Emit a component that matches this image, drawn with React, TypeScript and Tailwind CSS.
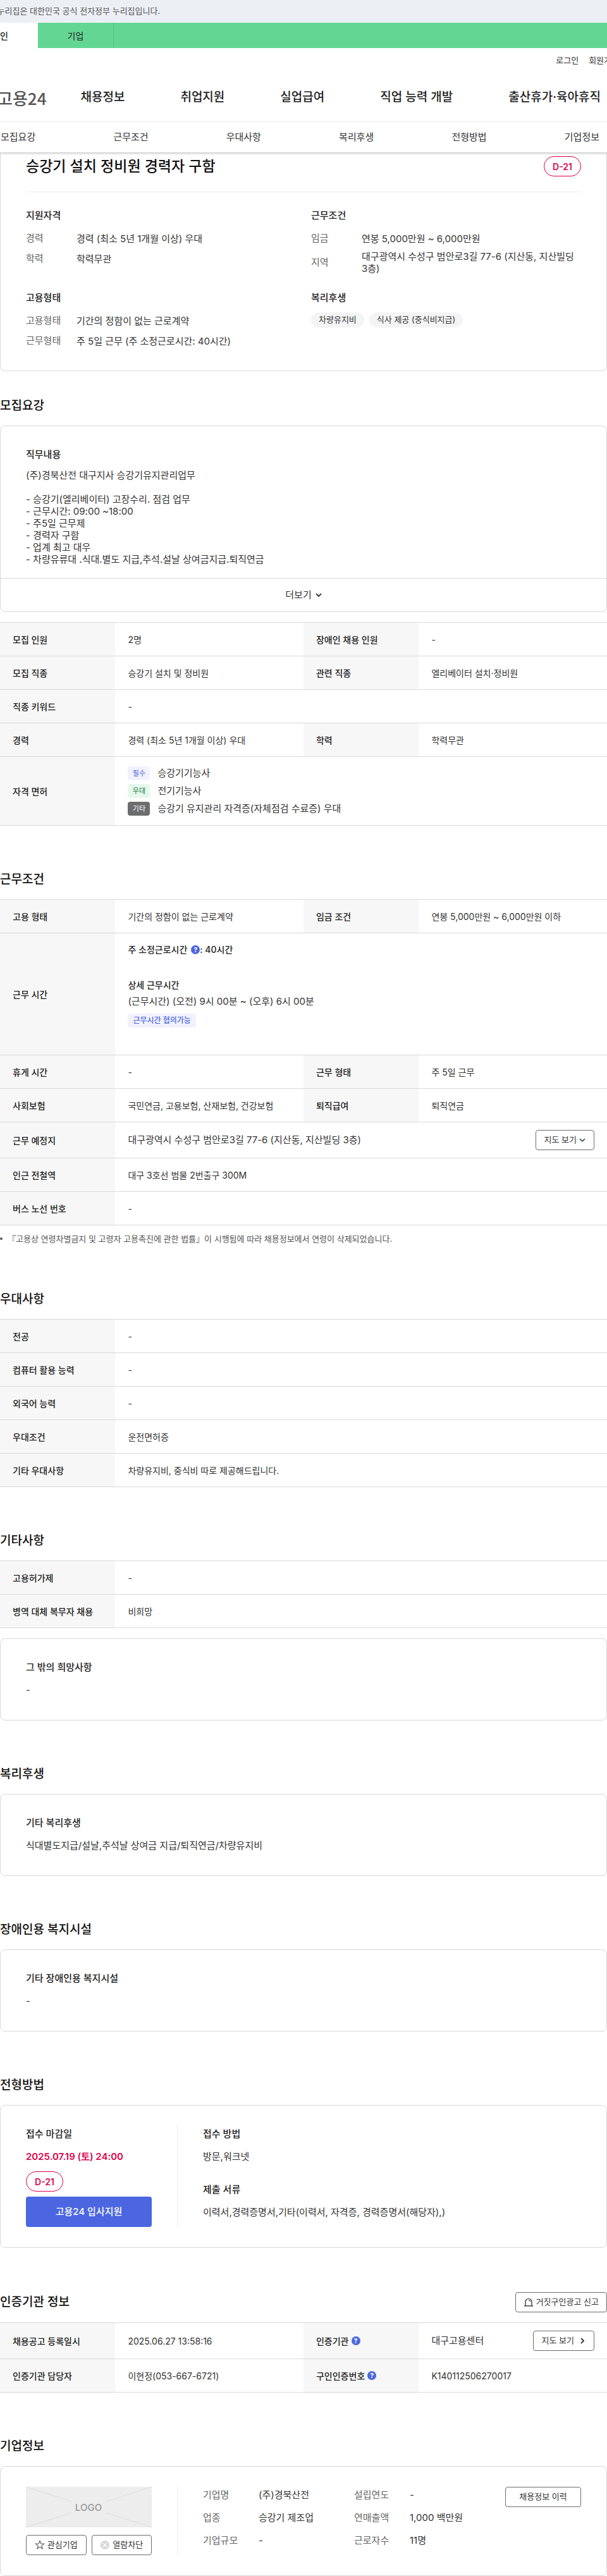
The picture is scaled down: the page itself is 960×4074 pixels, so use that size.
import React from "react";

type Field = {
  label: string;
  value: React.ReactNode;
  help?: boolean;
};

const mainMenu = ["채용정보", "취업지원", "실업급여", "직업 능력 개발", "출산휴가·육아휴직"];
const anchors = ["모집요강", "근무조건", "우대사항", "복리후생", "전형방법", "기업정보"];

const jobLines = [
  "(주)경북산전 대구지사 승강기유지관리업무",
  "",
  "- 승강기(엘리베이터) 고장수리. 점검 업무",
  "- 근무시간: 09:00 ~18:00",
  "- 주5일 근무제",
  "- 경력자 구함",
  "- 업계 최고 대우",
  "- 차량유류대 .식대.별도 지급,추석.설날 상여금지급.퇴직연금",
];

const HelpButton = () => (
  <button
    type="button"
    aria-label="도움말"
    className="inline-flex h-3.5 w-3.5 shrink-0 items-center justify-center rounded-full bg-[#4b66e0] text-[10px] font-bold leading-none text-white"
  >
    ?
  </button>
);

const Chevron = ({ className, strokeWidth = 1.5 }: { className?: string; strokeWidth?: number }) => (
  <svg viewBox="0 0 10 10" className={className} fill="none" stroke="currentColor" strokeWidth={strokeWidth}>
    <path d="M1 3l4 4 4-4" />
  </svg>
);

const DDay = () => (
  <span className="inline-flex h-8 w-[59px] items-center justify-center rounded-full border border-[#e0004d] text-[14px] font-semibold text-[#e0004d]">
    D-21
  </span>
);

const SmallButton = ({ children, className = "px-[13px]" }: { children: React.ReactNode; className?: string }) => (
  <button
    type="button"
    className={`inline-flex h-8 shrink-0 items-center justify-center gap-1 whitespace-nowrap rounded border border-[#6d6d6d] bg-white text-[13px] text-[#333] ${className}`}
  >
    {children}
  </button>
);

const Section = ({
  title,
  action,
  className = "mt-[70px]",
  children,
}: {
  title: string;
  action?: React.ReactNode;
  className?: string;
  children: React.ReactNode;
}) => (
  <section className={className}>
    <div className="mb-4 flex items-center justify-between">
      <h2 className="text-[19px] font-medium leading-[30px] text-[#111]">{title}</h2>
      {action}
    </div>
    {children}
  </section>
);

const Card = ({ children, className = "" }: { children: React.ReactNode; className?: string }) => (
  <div className={`rounded-lg border border-[#d9d9d9] bg-white ${className}`}>{children}</div>
);

const SubTitle = ({ children }: { children: React.ReactNode }) => (
  <h3 className="mb-2.5 text-[15px] font-medium leading-[26px] text-[#222]">{children}</h3>
);

const TextCard = ({ title, text }: { title: string; text: string }) => (
  <Card className="px-10 pb-[34px] pt-8">
    <SubTitle>{title}</SubTitle>
    <p className="leading-[26px]">{text}</p>
  </Card>
);

const SummaryList = ({ title, items }: { title: string; items: Field[] }) => (
  <div>
    <SubTitle>{title}</SubTitle>
    <dl className="flex flex-col gap-1.5">
      {items.map((item) => (
        <div key={item.label} className="flex min-h-[26px] items-center">
          <dt className="w-20 shrink-0 text-[#666]">{item.label}</dt>
          <dd className="leading-[19px]">{item.value}</dd>
        </div>
      ))}
    </dl>
  </div>
);

// each row holds either one field (spanning the table) or two
const InfoTable = ({ caption, rows }: { caption: string; rows: Field[][] }) => (
  <table className="w-full table-fixed border-collapse text-left text-[14px]">
    <caption className="sr-only">{caption}</caption>
    <colgroup>
      <col className="w-[19%]" />
      <col className="w-[31%]" />
      <col className="w-[19%]" />
      <col className="w-[31%]" />
    </colgroup>
    <tbody>
      {rows.map((row) => (
        <tr key={row[0].label} className="h-[53px] border-y border-[#d9d9d9]">
          {row.map((field) => (
            <React.Fragment key={field.label}>
              <th scope="row" className="bg-[#f7f7f7] px-5 font-medium text-[#222]">
                <span className="flex items-center gap-1">
                  {field.label}
                  {field.help && <HelpButton />}
                </span>
              </th>
              <td colSpan={row.length === 1 ? 3 : 1} className="px-5">
                {field.value}
              </td>
            </React.Fragment>
          ))}
        </tr>
      ))}
    </tbody>
  </table>
);

const licenses = [
  { tag: "필수", name: "승강기기능사", color: "bg-[#f1f2fe] text-[#4b66e0]" },
  { tag: "우대", name: "전기기능사", color: "bg-[#e6f8ec] text-[#137a3c]" },
  { tag: "기타", name: "승강기 유지관리 자격증(자체점검 수료증) 우대", color: "bg-[#6d6d6d] text-white" },
];

const recruitRows: Field[][] = [
  [{ label: "모집 인원", value: "2명" }, { label: "장애인 채용 인원", value: "-" }],
  [{ label: "모집 직종", value: "승강기 설치 및 정비원" }, { label: "관련 직종", value: "엘리베이터 설치·정비원" }],
  [{ label: "직종 키워드", value: "-" }],
  [{ label: "경력", value: "경력 (최소 5년 1개월 이상) 우대" }, { label: "학력", value: "학력무관" }],
  [
    {
      label: "자격 면허",
      value: (
        <ul className="flex flex-col gap-1.5 py-[15px] text-[15px]">
          {licenses.map((item) => (
            <li key={item.tag} className="flex h-[22px] items-center gap-3">
              <span className={`flex h-[22px] w-[35px] items-center justify-center rounded text-[11px] ${item.color}`}>
                {item.tag}
              </span>
              {item.name}
            </li>
          ))}
        </ul>
      ),
    },
  ],
];

const workRows: Field[][] = [
  [
    { label: "고용 형태", value: "기간의 정함이 없는 근로계약" },
    { label: "임금 조건", value: "연봉 5,000만원 ~ 6,000만원 이하" },
  ],
  [
    {
      label: "근무 시간",
      value: (
        <div className="pb-[43px] pt-[13px] leading-[26px]">
          <p className="flex items-center font-medium text-[#222]">
            <span className="mr-1.5">주 소정근로시간</span>
            <HelpButton />: 40시간
          </p>
          <p className="mt-[30px] font-medium text-[#222]">상세 근무시간</p>
          <p className="text-[15px]">(근무시간) (오전) 9시 00분 ~ (오후) 6시 00분</p>
          <span className="mt-1.5 flex h-[22px] w-fit items-center rounded bg-[#f1f2fe] px-2 text-[12px] font-medium text-[#4b66e0]">
            근무시간 협의가능
          </span>
        </div>
      ),
    },
  ],
  [{ label: "휴게 시간", value: "-" }, { label: "근무 형태", value: "주 5일 근무" }],
  [{ label: "사회보험", value: "국민연금, 고용보험, 산재보험, 건강보험" }, { label: "퇴직급여", value: "퇴직연금" }],
  [
    {
      label: "근무 예정지",
      value: (
        <div className="flex items-center justify-between py-3 text-[15px]">
          대구광역시 수성구 범안로3길 77-6 (지산동, 지산빌딩 3층)
          <SmallButton>
            지도 보기
            <Chevron className="h-2.5 w-2.5" />
          </SmallButton>
        </div>
      ),
    },
  ],
  [{ label: "인근 전철역", value: "대구 3호선 범물 2번출구 300M" }],
  [{ label: "버스 노선 번호", value: "-" }],
];

const preferRows: Field[][] = [
  [{ label: "전공", value: "-" }],
  [{ label: "컴퓨터 활용 능력", value: "-" }],
  [{ label: "외국어 능력", value: "-" }],
  [{ label: "우대조건", value: "운전면허증" }],
  [{ label: "기타 우대사항", value: "차량유지비, 중식비 따로 제공해드립니다." }],
];

const etcRows: Field[][] = [
  [{ label: "고용허가제", value: "-" }],
  [{ label: "병역 대체 복무자 채용", value: "비희망" }],
];

const agencyRows: Field[][] = [
  [
    { label: "채용공고 등록일시", value: "2025.06.27 13:58:16" },
    {
      label: "인증기관",
      help: true,
      value: (
        <div className="flex items-center justify-between py-3 text-[15px]">
          대구고용센터
          <SmallButton>
            지도 보기
            <Chevron className="ml-1 h-2.5 w-2.5 -rotate-90" strokeWidth={1.8} />
          </SmallButton>
        </div>
      ),
    },
  ],
  [
    { label: "인증기관 담당자", value: "이현정(053-667-6721)" },
    { label: "구인인증번호", help: true, value: "K140112506270017" },
  ],
];

const companyColumns: Field[][] = [
  [
    { label: "기업명", value: "(주)경북산전" },
    { label: "업종", value: "승강기 제조업" },
    { label: "기업규모", value: "-" },
  ],
  [
    { label: "설립연도", value: "-" },
    { label: "연매출액", value: "1,000 백만원" },
    { label: "근로자수", value: "11명" },
  ],
];

const Header = () => (
  <header className="overflow-hidden whitespace-nowrap bg-white">
    <div className="flex h-9 items-center bg-[#ecf0f5]">
      <p className="-ml-5 text-[13px] text-[#555]">이 누리집은 대한민국 공식 전자정부 누리집입니다.</p>
    </div>
    <div className="bg-[#63d694]">
      <nav aria-label="회원 구분" className="-ml-[60px] flex h-10 text-[14px] text-[#222]">
        <a href="#person" className="flex w-[120px] items-center justify-center bg-white font-medium">
          개인
        </a>
        <a href="#company" className="flex w-[120px] items-center justify-center border-r border-[#55c886]">
          기업
        </a>
      </nav>
    </div>
    <div className="flex h-10 items-center justify-end text-[13px] text-[#333]">
      <div className="-mr-[19px] flex gap-4">
        <a href="#login">로그인</a>
        <a href="#join">회원가입</a>
      </div>
    </div>
    <div className="flex h-[76px] items-center">
      <a
        href="#home"
        className="-ml-1 mr-[54px] font-['Noto_Sans_CJK_KR',sans-serif] text-[26px] font-medium text-[#555]"
      >
        고용24
      </a>
      <nav aria-label="주 메뉴" className="flex gap-[88px] text-[19px] font-medium text-[#222]">
        {mainMenu.map((menu) => (
          <a key={menu} href="#menu">
            {menu}
          </a>
        ))}
      </nav>
    </div>
    <nav
      aria-label="채용정보 바로가기"
      className="flex h-[49px] items-center justify-between border-t border-[#ebebeb] pl-px pr-3 text-[15px] text-[#333]"
    >
      {anchors.map((anchor) => (
        <a key={anchor} href={`#${anchor}`}>
          {anchor}
        </a>
      ))}
    </nav>
  </header>
);

const App = () => {
  return (
    <div className="min-h-screen bg-white font-['Inter','Noto_Sans_CJK_KR',sans-serif] text-[15px] text-[#333]">
      <div className="relative shadow-[0_1px_4px_rgba(0,0,0,0.3)]">
        <Header />
      </div>

      <main>
        <div className="rounded-b-lg border border-t-0 border-[#d9d9d9] px-10 pb-[34px] pt-1.5">
          <div className="flex items-center justify-between border-b border-[#ebebeb] pb-6">
            <h1 className="text-[23px] font-medium leading-8 text-[#111]">승강기 설치 정비원 경력자 구함</h1>
            <DDay />
          </div>
          <div className="grid grid-cols-2 gap-x-6 gap-y-6 pt-6">
            <SummaryList
              title="지원자격"
              items={[
                { label: "경력", value: "경력 (최소 5년 1개월 이상) 우대" },
                { label: "학력", value: "학력무관" },
              ]}
            />
            <SummaryList
              title="근무조건"
              items={[
                { label: "임금", value: "연봉 5,000만원 ~ 6,000만원" },
                { label: "지역", value: "대구광역시 수성구 범안로3길 77-6 (지산동, 지산빌딩 3층)" },
              ]}
            />
            <SummaryList
              title="고용형태"
              items={[
                { label: "고용형태", value: "기간의 정함이 없는 근로계약" },
                { label: "근무형태", value: "주 5일 근무 (주 소정근로시간: 40시간)" },
              ]}
            />
            <div>
              <SubTitle>복리후생</SubTitle>
              <ul className="flex gap-2 text-[13px]">
                <li className="flex h-6 items-center rounded-full bg-[#f4f4f4] px-3">차량유지비</li>
                <li className="flex h-6 items-center rounded-full bg-[#f4f4f4] px-3">식사 제공 (중식비지급)</li>
              </ul>
            </div>
          </div>
        </div>

        <Section title="모집요강" className="mt-10">
          <Card className="mb-4">
            <div className="px-10 pb-5 pt-8">
              <SubTitle>직무내용</SubTitle>
              <p className="whitespace-pre-line leading-[19px]">{jobLines.join("\n")}</p>
            </div>
            <button
              type="button"
              className="flex h-[53px] w-full items-center justify-center gap-1.5 border-t border-[#d9d9d9]"
            >
              더보기
              <Chevron className="h-2.5 w-2.5" strokeWidth={1.8} />
            </button>
          </Card>
          <InfoTable caption="모집요강" rows={recruitRows} />
        </Section>

        <Section title="근무조건">
          <InfoTable caption="근무조건" rows={workRows} />
          <ul className="mt-2.5 text-[13px] leading-[22px] text-[#555]">
            <li className="flex items-center gap-2">
              <span className="h-1 w-1 rounded-full bg-[#555]" />
              『고용상 연령차별금지 및 고령자 고용촉진에 관한 법률』이 시행됨에 따라 채용정보에서 연령이 삭제되었습니다.
            </li>
          </ul>
        </Section>

        <Section title="우대사항">
          <InfoTable caption="우대사항" rows={preferRows} />
        </Section>

        <Section title="기타사항">
          <div className="mb-4">
            <InfoTable caption="기타사항" rows={etcRows} />
          </div>
          <TextCard title="그 밖의 희망사항" text="-" />
        </Section>

        <Section title="복리후생">
          <TextCard title="기타 복리후생" text="식대별도지급/설날,추석날 상여금 지급/퇴직연금/차량유지비" />
        </Section>

        <Section title="장애인용 복지시설">
          <TextCard title="기타 장애인용 복지시설" text="-" />
        </Section>

        <Section title="전형방법">
          <Card className="flex px-10 py-8">
            <div className="flex w-[240px] shrink-0 flex-col items-start border-r border-[#ebebeb] pr-10">
              <SubTitle>접수 마감일</SubTitle>
              <p className="mb-2.5 font-semibold leading-[26px] text-[#e0004d]">2025.07.19 (토) 24:00</p>
              <DDay />
              <button type="button" className="mt-2 h-12 w-full rounded bg-[#4b66e0] font-medium text-white">
                고용24 입사지원
              </button>
            </div>
            <div className="flex flex-col gap-[26px] pl-10">
              <div>
                <SubTitle>접수 방법</SubTitle>
                <p className="leading-[26px]">방문,워크넷</p>
              </div>
              <div>
                <SubTitle>제출 서류</SubTitle>
                <p className="leading-[26px]">이력서,경력증명서,기타(이력서, 자격증, 경력증명서(해당자),)</p>
              </div>
            </div>
          </Card>
        </Section>

        <Section
          title="인증기관 정보"
          action={
            <SmallButton className="px-3">
              <svg viewBox="0 0 16 16" className="h-4 w-4" fill="none" stroke="#222" strokeWidth="1.2">
                <path d="M3 13.5V7.5a5 5 0 0 1 10 0v6M1 13.8h14" />
                <path d="M8 4.8a2.6 2.6 0 0 1 2.6 2.6" strokeWidth="1" />
              </svg>
              거짓구인광고 신고
            </SmallButton>
          }
        >
          <InfoTable caption="인증기관 정보" rows={agencyRows} />
        </Section>

        <Section title="기업정보">
          <Card className="flex px-10 py-8">
            <div className="w-[240px] shrink-0 border-r border-[#ebebeb] pr-10">
              <svg viewBox="0 0 199 64" className="mb-3 h-16 w-full" role="img" aria-label="LOGO">
                <rect width="199" height="64" fill="#ededed" />
                <path d="M0 0l72 23M199 0l-72 23M0 64l72-23M199 64l-72-23" stroke="#dcdcdc" />
                <text x="99" y="38" textAnchor="middle" fontSize="15" fontWeight="500" fill="#999">
                  LOGO
                </text>
              </svg>
              <div className="grid grid-cols-2 gap-2">
                <SmallButton className="px-0">
                  <svg viewBox="0 0 16 16" className="h-4 w-4" fill="none" stroke="#555" strokeWidth="1.1">
                    <path d="M8 1.3l1.7 4.5 4.9.2-3.8 3.1 1.3 4.7L8 11.1l-4.1 2.7 1.3-4.7L1.4 6l4.9-.2z" />
                  </svg>
                  관심기업
                </SmallButton>
                <SmallButton className="px-0">
                  <svg viewBox="0 0 16 16" className="h-4 w-4" fill="none">
                    <circle cx="8" cy="8" r="7" fill="#d9d9d9" />
                    <path d="M4.8 4.8l6.4 6.4M11.2 4.8l-6.4 6.4" stroke="#fff" strokeWidth="1.3" />
                  </svg>
                  열람차단
                </SmallButton>
              </div>
            </div>
            <div className="flex flex-1 items-start pl-10">
              {companyColumns.map((column) => (
                <dl key={column[0].label} className="flex w-[239px] flex-col gap-2.5 leading-[26px]">
                  {column.map((item) => (
                    <div key={item.label} className="flex">
                      <dt className="w-[88px] shrink-0 text-[#666]">{item.label}</dt>
                      <dd>{item.value}</dd>
                    </div>
                  ))}
                </dl>
              ))}
              <SmallButton className="w-[120px]">채용정보 이력</SmallButton>
            </div>
          </Card>
        </Section>
      </main>
    </div>
  );
};

export default App;
